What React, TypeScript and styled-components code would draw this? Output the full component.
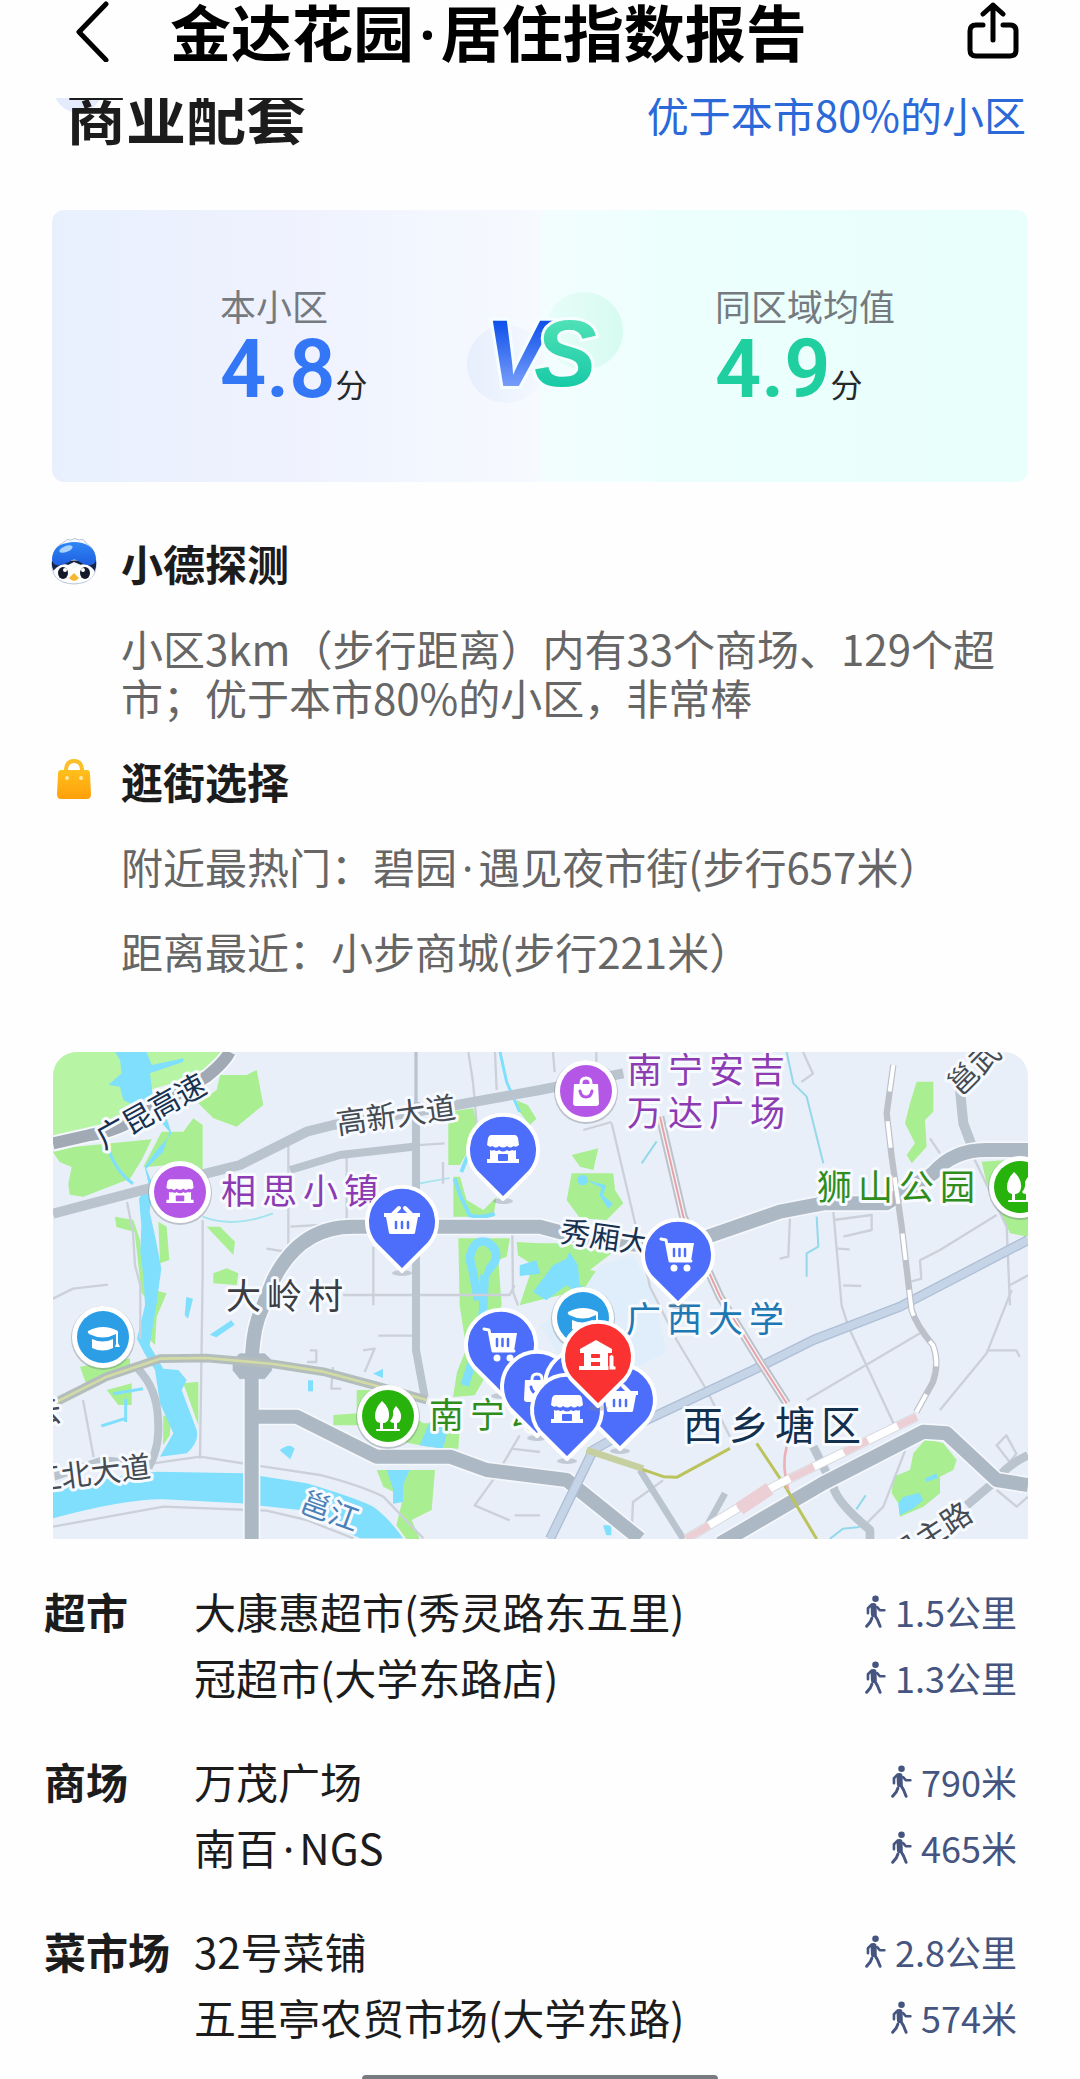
import React from "react";
import styled, { createGlobalStyle } from "styled-components";

const cjk = `"Noto Sans CJK SC", "Noto Sans", sans-serif`;

const GlobalStyle = createGlobalStyle`
  *, *::before, *::after { box-sizing: border-box; }
  body { margin: 0; background: #fefefe; color: #1c1c1c; font-family: ${cjk}; }
  h1, h2, h3, p, dl, dd, dt, ul { margin: 0; padding: 0; }
  button { border: 0; padding: 0; background: none; color: inherit; font: inherit; cursor: pointer; }
  svg { display: block; }
`;

const Page = styled.div`
  display: flex;
  flex-direction: column;
`;

const TopBar = styled.header`
  display: flex;
  align-items: flex-start;
  padding: 0 60px 36px 74px;
`;

const Title = styled.h1`
  flex: 1;
  padding-left: 60px;
  font-size: 61px;
  line-height: 62px;
  font-weight: 600;
  color: #000;
`;

const IconButton = styled.button`
  display: flex;
  align-items: center;
  height: 62px;
`;

const NarrowDot = styled.span`
  padding: 0 5px;
  font-family: "Noto Sans", sans-serif;
  line-height: 0;
`;

const Report = styled.main`
  overflow: hidden;
`;

const HeadingRow = styled.div`
  display: flex;
  align-items: center;
  justify-content: space-between;
  margin-top: -14px;
  padding: 0 54px 0 52px;
`;

const Heading = styled.h2`
  padding-left: 14px;
  font-size: 60px;
  line-height: 60px;
  font-weight: 600;
  background: radial-gradient(circle at 26px 4px, #e3ebfd 24px, transparent 25px);
`;

const Rank = styled.a`
  font-size: 42px;
  line-height: 60px;
  color: #2b68d8;
  text-decoration: none;
`;

const Compare = styled.section`
  position: relative;
  display: grid;
  grid-template-columns: 1fr 1fr;
  min-height: 272px;
  margin: 66px 52px 0;
  border-radius: 12px;
  overflow: hidden;
  background: #f5fbfe;
`;

const Side = styled.div<{ $tone: "own" | "area" }>`
  display: flex;
  flex-direction: column;
  gap: 5px;
  padding-top: 77px;
  padding-left: ${(p) => (p.$tone === "own" ? "168px" : "175px")};
  border-radius: 12px;
  background: ${(p) =>
    p.$tone === "own"
      ? "linear-gradient(90deg, #e8f0fe 0%, #eff2fe 48%, #f6fafe 100%)"
      : "linear-gradient(90deg, #f3fdfe 0%, #edfffd 24%, #e8fffb 100%)"};
`;

const SideLabel = styled.span`
  font-size: 36px;
  line-height: 36px;
  color: #757a80;
`;

const Score = styled.div<{ $color: string }>`
  display: flex;
  align-items: baseline;
  font-family: Roboto, ${cjk};
  font-size: 81px;
  line-height: 84px;
  font-weight: 600;
  color: ${(p) => p.$color};
`;

const Unit = styled.span`
  font-family: ${cjk};
  font-size: 32px;
  line-height: 32px;
  font-weight: 400;
  color: #26292c;
`;

const VsBadge = styled.svg`
  position: absolute;
  left: 50%;
  top: 50%;
  width: 168px;
  height: 128px;
  transform: translate(-50%, -50%);
`;

const Insights = styled.div`
  display: flex;
  flex-direction: column;
  gap: 36px;
  padding: 57px 48px 0;
`;

const Insight = styled.section`
  display: grid;
  grid-template-columns: 52px 1fr;
  column-gap: 21px;
  row-gap: 36px;
`;

const InsightIcon = styled.div`
  display: flex;
  align-items: center;
  justify-content: center;
  height: 44px;
`;

const InsightTitle = styled.h3`
  font-size: 42px;
  line-height: 48px;
  font-weight: 600;
`;

const InsightText = styled.p`
  grid-column: 2;
  font-size: 42px;
  line-height: 49px;
  color: #666;
`;

const MapCard = styled.figure`
  margin: 77px 52px 0 53px;
  border-radius: 24px 24px 0 0;
  overflow: hidden;
  background: #e9eff8;

  svg { width: 100%; height: auto; }
`;

const Places = styled.dl`
  display: flex;
  flex-direction: column;
  gap: 38px;
  padding: 39px 63px 25px 44px;
`;

const Group = styled.div`
  display: grid;
  grid-template-columns: 150px 1fr;
`;

const GroupName = styled.dt`
  font-size: 42px;
  line-height: 66px;
  font-weight: 600;
`;

const Place = styled.dd`
  grid-column: 2;
  display: flex;
  align-items: center;
  justify-content: space-between;
`;

const PlaceName = styled.span`
  font-size: 42px;
  line-height: 66px;
`;

const Distance = styled.span`
  display: flex;
  align-items: center;
  gap: 9px;
  font-size: 36px;
  line-height: 66px;
  color: #45557f;
`;

const HomeBar = styled.div`
  width: 33%;
  height: 4px;
  margin: 0 auto;
  border-radius: 6px 6px 0 0;
  background: #777a7e;
`;

/* A middle dot set in the Latin face, which keeps it from filling a whole CJK cell. */
const withDots = (text: string) =>
  text.split("·").map((part, i) => (
    <React.Fragment key={i}>
      {i > 0 && <NarrowDot>·</NarrowDot>}
      {part}
    </React.Fragment>
  ));

/* ---------- small icons ---------- */

const WalkIcon = () => (
  <svg width="21" height="33" viewBox="144 98 64 100" fill="none" stroke="currentColor" strokeLinecap="round" strokeLinejoin="round" aria-hidden="true">
    <circle cx="176" cy="109" r="10" fill="currentColor" stroke="none" />
    <path d="M170 131L171 156" strokeWidth="18" />
    <path d="M164 127L153 138V153M181 135L189 144H203" strokeWidth="8" />
    <path d="M173 158L182 173L190 193M165 168L160 180L149 193" strokeWidth="9" />
  </svg>
);

const Bird = () => (
  <svg width="48" height="48" viewBox="0 0 48 48" aria-hidden="true">
    <defs>
      <linearGradient id="cap" x1="0" y1="0" x2="0" y2="1">
        <stop offset="0" stopColor="#2f86f7" />
        <stop offset="1" stopColor="#1f5fe0" />
      </linearGradient>
    </defs>
    <path d="M14 5Q17 1 21 3Q25 0 29 3Q34 1 36 6Q46 12 46 26Q47 46 24 47Q1 46 2 26Q3 10 14 5Z" fill="#f4f8fd" stroke="#b8c6da" strokeWidth="1" />
    <path d="M2 24Q1 31 5 35Q10 27 18 28L24 25L31 28Q39 27 44 35Q47 30 46 23Z" fill="#172447" />
    <path d="M4 33Q14 22 24 32Q35 22 44 33Q45 45 24 46Q4 45 4 33Z" fill="#fff" />
    <path d="M2 22Q3 8 17 6Q24 4 32 6Q45 9 46 22Q46 27 41 28Q35 29 30 25Q24 20 19 25Q12 29 6 28Q2 26 2 22Z" fill="url(#cap)" />
    <ellipse cx="16" cy="12" rx="7" ry="3" transform="rotate(-20 16 12)" fill="#a8d2ff" />
    <ellipse cx="13" cy="36" rx="5" ry="6" fill="#15192b" />
    <ellipse cx="35" cy="36" rx="5" ry="6" fill="#15192b" />
    <circle cx="15" cy="33" r="2" fill="#fff" />
    <circle cx="33" cy="33" r="2" fill="#fff" />
    <path d="M24 36L29 41Q24 47 19 41Z" fill="#f7b733" />
  </svg>
);

const Bag = () => (
  <svg width="36" height="40" viewBox="0 0 36 40" aria-hidden="true">
    <defs>
      <linearGradient id="bag" x1="0" y1="0" x2="0" y2="1">
        <stop offset="0" stopColor="#ffc01c" />
        <stop offset="1" stopColor="#ff9f0a" />
      </linearGradient>
    </defs>
    <path d="M10 13V10Q11 2 18 2Q25 2 26 10V13" fill="none" stroke="#fcbf2a" strokeWidth="4" />
    <path d="M5 11H31Q34 11 34 15L35 35Q35 40 31 40H5Q1 40 1 35L2 15Q2 11 5 11Z" fill="url(#bag)" />
    <circle cx="11" cy="19" r="2" fill="#ffe9a8" />
    <circle cx="25" cy="19" r="2" fill="#ffe9a8" />
  </svg>
);

/* ---------- map ---------- */

type GlyphName = "store" | "basket" | "cart" | "bag" | "home" | "cap" | "tree";

/* Every glyph is drawn around 0,0 on a field of about 36 units. */
const Glyph = ({ name, tone }: { name: GlyphName; tone: string }) => {
  switch (name) {
    case "store":
      return (
        <g fill="#fff">
          <path d="M-12 -15H12Q14 -15 15 -12L16 -5Q13 -2 10.500 -4Q7 -1 4 -4Q0 -1 -4 -4Q-7 -1 -10.500 -4Q-13 -2 -16 -5L-15 -12Q-14 -15 -12 -15Z" />
          <path d="M-13 0Q-10 1 -9 0Q-6 2 -4 0Q0 3 4 0Q6 2 9 0Q11 1 13 0V9H16V13H-16V9H-13Z" />
          <rect x="-5" y="4" width="10" height="7" rx="1" fill={tone} />
        </g>
      );
    case "basket":
      return (
        <g fill="#fff">
          <path d="M-10 -7L-3 -14M10 -7L3 -14" stroke="#fff" strokeWidth="4" strokeLinecap="round" />
          <path d="M-18 -9H18V-5H16L13 11Q13 12 11 12H-11Q-13 12 -13 11L-16 -5H-18Z" />
          <path d="M-6 0V6M0 0V6M6 0V6" stroke={tone} strokeWidth="2.500" strokeLinecap="round" />
        </g>
      );
    case "cart":
      return (
        <g fill="#fff">
          <path d="M-17 -16L-12 -15L-8 6H13" fill="none" stroke="#fff" strokeWidth="3" strokeLinecap="round" strokeLinejoin="round" />
          <path d="M-11 -12H16L13 6H-8Z" />
          <path d="M-4 -6V1M1.500 -6V1M7 -6V1" stroke={tone} strokeWidth="2.500" strokeLinecap="round" />
          <circle cx="-4" cy="13" r="3.500" />
          <circle cx="9" cy="13" r="3.500" />
        </g>
      );
    case "bag":
      return (
        <g fill="#fff">
          <path d="M-5 -6V-8Q-5 -13 0 -13Q5 -13 5 -8V-6" fill="none" stroke="#fff" strokeWidth="3" />
          <path d="M-12 -7H12L13 12Q13 15 10 15H-10Q-13 15 -13 12Z" />
          <path d="M-6 0Q-5 6 0 6Q5 6 6 0" fill="none" stroke={tone} strokeWidth="3" strokeLinecap="round" />
        </g>
      );
    case "home":
      return (
        <g fill="#fff">
          <path d="M0 -17L16 -8V-4H12V9H18V13H-17V9H-12V-4H-16V-8Z" transform="translate(-2 0)" />
          <rect x="-7" y="-3" width="9" height="4" rx="1" fill={tone} />
          <rect x="-7" y="5" width="9" height="4" fill={tone} />
          <path d="M11 13V-1Q14 -4 16 -1V9H18V13Z" stroke={tone} strokeWidth="1" />
        </g>
      );
    case "cap":
      return (
        <g fill="#fff">
          <path d="M-15 -6Q0 -14 15 -6Q15 -4 13 -3Q0 4 -14 -3Q-16 -5 -15 -6Z" />
          <path d="M-11 2Q0 7 10 2V11Q0 16 -11 11Z" />
          <path d="M14 -5V6" stroke="#fff" strokeWidth="2" />
          <path d="M14 4L17 10H12Z" />
        </g>
      );
    case "tree":
      return (
        <g fill="#fff">
          <path d="M-6 -15Q2 -8 1 1Q0 7 -5 7V14H-8V7Q-13 6 -13 0Q-13 -8 -6 -15Z" />
          <path d="M8 -10Q14 -4 13 2Q12 7 9 7V14H6V7Q3 7 2 5Q6 1 5 -5Q6 -8 8 -10Z" />
          <path d="M-11 14H11" stroke="#fff" strokeWidth="2" strokeLinecap="round" />
        </g>
      );
  }
};

const Pin = ({ x, y, icon, tone = "#4d6dfb" }: { x: number; y: number; icon: GlyphName; tone?: string }) => (
  <g transform={`translate(${x} ${y})`}>
    <ellipse cx="0" cy="51" rx="10" ry="3" fill="#7c8798" opacity="0.35" />
    <path d="M0 49L-27 22A35 35 0 1 1 27 22Z" fill={tone} stroke="#fff" strokeWidth="4" strokeLinejoin="round" />
    <Glyph name={icon} tone={tone} />
  </g>
);

const Poi = ({ x, y, icon, tone }: { x: number; y: number; icon: GlyphName; tone: string }) => (
  <g transform={`translate(${x} ${y})`}>
    <circle cy="1" r="32" fill="#68707c" opacity="0.35" />
    <circle r="31" fill="#fff" />
    <circle r="26" fill={tone} />
    <g transform={icon === "store" ? "scale(0.85)" : undefined}>
      <Glyph name={icon} tone={tone} />
    </g>
  </g>
);

const MapText = styled.text<{ $size: number; $color: string; $place?: boolean }>`
  font-family: ${cjk};
  font-size: ${(p) => p.$size}px;
  font-weight: 400;
  letter-spacing: ${(p) => (p.$place ? "6px" : "normal")};
  fill: ${(p) => p.$color};
  stroke: #f7faff;
  stroke-width: 6px;
  stroke-linejoin: round;
  paint-order: stroke;
`;

const RoadText = ({ x, y, turn, color = "#454b52", children }: { x: number; y: number; turn: number; color?: string; children: string }) => (
  <MapText $size={30} $color={color} textAnchor="middle" transform={`translate(${x} ${y}) rotate(${turn})`} dy="11">
    {children}
  </MapText>
);

const Terrain = () => (
  <g transform="scale(0.33333)" fill="none" strokeLinejoin="round">
    {/* parks */}
    <g fill="#a9ee90">
      <path d="M0 0H516L440 70L300 110L200 200L130 230L0 255Z" fill="#b7f4a3" />
      <path d="M0 300L60 285L160 275L296 262L268 320L231 380L91 434L50 428L46 395L56 345L20 330Z" />
      <path d="M326 239L391 239L421 199L449 219V359L401 334L291 344L271 344Z" />
      <path d="M501 69H581L611 54L631 159L551 224L481 199L436 154L491 114Z" />
      <path d="M186 494L241 504L261 564L281 744L265 720L245 540L190 525Z" />
      <path d="M316 509L341 524L349 624L321 634Z" />
      <path d="M461 524H501L546 569L541 609Z" />
      <path d="M481 664L521 649L556 664L551 699L481 694Z" />
      <path d="M1186 179L1261 169L1271 214L1246 294L1221 339H1186Z" />
      <path d="M1201 374L1221 374L1241 444L1291 474L1331 434L1321 494H1201Z" />
      <path d="M1216 559H1371L1361 614L1336 624L1346 760L1310 860L1300 970L1265 1030L1200 1035L1212 960L1240 890L1220 760Z" />
      <path d="M1391 145L1425 160L1450 200L1430 220L1400 180Z" />
      <path d="M301 714L341 724L311 794L306 879L271 844Z" />
      <path d="M81 944L231 919V944L101 1000Z" />
      <path d="M161 1014L236 994V1059H196Z" />
      <path d="M391 994L436 989L436 1120Z" />
      <path d="M331 1090L355 1100L350 1150L330 1180Z" />
      <path d="M841 1089L911 1084V1014H961L1111 1114L1221 1114L1216 1190L1126 1184L1050 1170L960 1120H841Z" />
      <path d="M971 1254H1146L1136 1374L1076 1404L1100 1461H1060L1030 1420L1051 1334L991 1304Z" />
      <path d="M2591 89H2641V179L2616 204L2621 284L2576 334L2561 309L2586 274L2556 214L2571 154Z" />
      <path d="M1556 309L1636 289L1621 354L1581 344Z" />
      <path d="M1556 364H1681L1686 414L1711 454L1661 504L1581 499L1541 444Z" />
      <path d="M1391 570L1460 574H1521L1701 584L1611 654L1661 664L1611 709L1461 744L1400 760L1440 640L1395 610Z" />
      <path d="M2786 329L2861 324L2925 484V554L2871 544L2801 394Z" />
      <path d="M2621 1159L2671 1174L2711 1224L2701 1254L2661 1274V1324L2611 1364L2541 1394L2536 1354L2516 1324L2521 1274L2571 1254L2581 1204Z" />
    </g>
    {/* university campus */}
    <path d="M1640 640L1740 610L1800 720L1840 900L1720 960L1540 940L1460 820L1560 760Z" fill="#dfeefa" />
    {/* rivers and ponds */}
    <g fill="#80dffd">
      <path d="M186 0L201 24L206 64L166 99L201 104L211 144L241 159L301 144L291 64L391 29V19L296 39L281 0Z" />
      <path d="M265 160L340 195L356 245L311 294L275 344L286 394L258 440L265 520L262 600L272 680L276 760L252 860L275 905L306 954L321 1054L361 1144L321 1214L401 1204Q440 1170 431 1134L386 1014L401 984L376 954L331 950L290 880L310 760L325 650L308 560L290 480L300 400L280 350L330 300L350 240L280 160Z" />
      <path d="M0 1314Q160 1275 311 1259L571 1264L761 1294Q900 1335 961 1364Q1010 1400 1050 1459H921L741 1374L561 1354L331 1342Q220 1340 0 1399Z" />
      <path d="M1500 640L1540 620L1550 600L1575 640L1580 700L1625 715L1600 745L1540 700L1480 745L1440 720Z" />
      <path d="M1400 640L1450 625L1462 665L1400 672Z" />
      <circle cx="1589" cy="384" r="16" />
      <path d="M1600 384L1660 400L1650 430L1680 455L1665 470L1640 430L1645 408Z" />
      <path d="M1001 1254H1070L1050 1300V1350L1020 1355V1310Z" />
      <path d="M1100 1180L1130 1110L1190 1110L1170 1190Z" />
      <path d="M2536 1354L2550 1335L2600 1322L2610 1345L2580 1370L2540 1390Z" />
      <path d="M2615 1280L2650 1264L2655 1278L2620 1290Z" />
      <path d="M470 848L535 805L545 818L490 856Z" />
      <path d="M400 735L420 740L405 800L395 790Z" />
      <path d="M960 965L990 950V978Z" />
      <path d="M765 985H780V1018H765Z" />
      <path d="M680 1195Q710 1170 725 1190L712 1222Z" />
      <path d="M1650 1420H1675V1450H1660Z" />
    </g>
    <g stroke="#80dffd" strokeWidth="16">
      <path d="M165 290Q190 360 240 395" strokeWidth="9" />
      <path d="M1205 380L1222 430L1250 490Q1290 500 1325 485M1225 360L1245 310" strokeWidth="12" />
      <path d="M1275 745L1260 660L1250 620Q1260 560 1300 570Q1340 590 1325 630L1295 670L1290 780L1280 860L1235 1000" strokeWidth="26" />
      <path d="M145 1122L215 1100M218 1040V1110M180 1025L270 1010" strokeWidth="9" />
      <path d="M449 494Q540 530 660 484" strokeWidth="6" stroke="#a3e4ee" />
      <path d="M1341 0L1361 90L1400 180" strokeWidth="9" />
      <path d="M2201 0L2221 94L2261 134L2311 334M2291 494L2296 584L2261 604V674" strokeWidth="6" stroke="#93d9e9" />
      <path d="M1766 334L1811 268M2438 1330L2410 1372M2330 1461L2370 1430L2420 1425" strokeWidth="6" stroke="#93d9e9" />
      <path d="M1100 394L1190 378" strokeWidth="5" stroke="#a3e4ee" />
    </g>
    <path d="M1275 610Q1262 650 1290 670Q1305 640 1290 605Z" fill="#a9ee90" />

    {/* lanes */}
    <g stroke="#cbd0d9" strokeWidth="7">
      <path d="M1246 0L1260 90L1271 214M1326 0L1331 114M706 274V600L640 590M881 314V514L712 524M449 504V664L441 1220" />
      <path d="M961 584V760M870 729H1370L1385 700M1378 550L1380 720L1395 760M1175 274L1085 280M1170 330V395" />
      <path d="M222 450L240 540L246 640L262 700L262 860M0 740L60 710L165 698M90 1044L122 1215" />
      <path d="M0 1424L331 1364L641 1376L761 1404L901 1459M301 1234L441 1214L601 1239L801 1269Q920 1300 991 1334L1111 1459" />
      <path d="M1676 214L1791 704L1871 864L1961 1014L2031 1154M1591 234L1676 210M1500 0L1505 60M1630 0V40" />
      <path d="M2211 494L2206 614L2180 620M2341 479L2366 760L2386 824L2531 1134M2341 504L2456 489V534L2371 554M2355 590L2390 592M2370 700L2425 702" />
      <path d="M2631 259L2661 304M2761 314L2861 524L2871 760M2831 489L2661 594L2601 625L2605 680L2570 690M2250 0L2280 65L2245 90" />
      <path d="M2261 1044L2601 844M2876 714L2801 904L2661 1074M2561 1184L2491 1364L2441 1414M2831 1314L2891 1364L2925 1334M2800 895H2890L2900 915" />
      <path d="M2831 1180L2860 1150L2890 1205L2870 1230ZM2925 670L2870 700M1735 1461L1740 1350L1830 1285" />
      <path d="M976 851H1080M930 895L965 890L935 960M770 895H790V930H762M840 945L835 1010H865M1400 1150L1330 1270L1265 1360L1370 1405M1385 1390H1461M1375 1190L1461 1200" />
    </g>

    {/* secondary roads */}
    <g stroke="#bac4cf" strokeWidth="26">
      <path d="M0 485L251 419L461 364L561 339L761 239L841 219L1211 159L1461 114L1711 64" strokeWidth="30" />
      <path d="M711 354L861 309L1081 284" strokeWidth="24" />
      <path d="M1089 0V160" strokeWidth="10" />
      <path d="M1089 150V894L1115 1034" strokeWidth="24" />
      <path d="M255 950Q312 1010 315 1100Q322 1180 290 1240" strokeWidth="24" />
      <path d="M0 1275L150 1225L300 1240" strokeWidth="24" />
      <path d="M2721 114L2731 214L2761 294" strokeWidth="30" />
      <path d="M2281 1184L2341 1304Q2350 1350 2451 1434V1461" strokeWidth="26" />
      <path d="M1761 1254L1891 1461M2016 1324L1961 1424" strokeWidth="20" />
      <path d="M2925 1210Q2860 1240 2831 1284L2741 1360" strokeWidth="26" />
    </g>

    {/* trunk roads */}
    <g stroke="#f4f8fc" strokeWidth="52">
      <path d="M596 1461V950Q596 860 615 800L661 684Q740 524 900 524H1461L1600 562Q1850 600 1961 555L2181 479L2311 454H2500L2640 364Q2700 294 2800 294H2925" />
      <path d="M596 1094H731L971 1214H1191L1301 1254L1541 1284L1641 1364L1761 1461" />
      <path d="M2001 1475L2311 1294L2611 1139L2681 1144L2831 1284L2925 1299" />
      <path d="M0 274L111 249Q200 235 260 190L351 140L461 74Q515 30 530 0" strokeWidth="48" />
    </g>
    <g stroke="#adb8c5" strokeWidth="42">
      <path d="M596 1461V950Q596 860 615 800L661 684Q740 524 900 524H1461L1600 562Q1850 600 1961 555L2181 479L2311 454H2500L2640 364Q2700 294 2800 294H2925" />
      <path d="M596 1094H731L971 1214H1191L1301 1254L1541 1284L1641 1364L1761 1461" />
      <path d="M2001 1475L2311 1294L2611 1139L2681 1144L2831 1284L2925 1299" />
      <path d="M0 274L111 249Q200 235 260 190L351 140L461 74Q515 30 530 0" strokeWidth="36" stroke="#a0a9b4" />
      <path d="M560 905H635L656 925V955L635 980H560L540 955V925Z" fill="#adb8c5" strokeWidth="2" />
    </g>

    {/* blue avenue */}
    <g>
      <path d="M1491 1461L1621 1194L1781 1104L2101 954L2281 864L2541 764L2925 564" stroke="#aebfd5" strokeWidth="30" />
      <path d="M1491 1461L1621 1194L1781 1104L2101 954L2281 864L2541 764L2925 564" stroke="#c6d4e8" strokeWidth="22" />
    </g>

    {/* metro lines */}
    <path d="M0 1055L161 974L321 920L461 918L661 936L811 959L961 999L1121 1044" stroke="#b3bdbc" strokeWidth="26" />
    <path d="M0 1055L161 974L321 920L461 918L661 936L811 959L961 999L1121 1044" stroke="#d3dba5" strokeWidth="8" />
    <path d="M1601 1194L1831 1274L1871 1276L2031 1189" stroke="#bac35c" strokeWidth="9" />
    <path d="M1601 1194L1770 1250" stroke="#c6cfa0" strokeWidth="20" />
    <path d="M2111 1174L2191 1294L2291 1461" stroke="#bac35c" strokeWidth="9" />
    <path d="M2201 1184Q2185 1240 2206 1314" stroke="#ecb1b7" strokeWidth="8" />
    <path d="M1821 194L1891 494L2001 734L2121 929L2201 1054" stroke="#bcc2ca" strokeWidth="26" />
    <path d="M1821 194L1891 494L2001 734L2121 929L2201 1054" stroke="#f4f3f6" strokeWidth="14" />
    <path d="M1821 194L1891 494L2001 734L2121 929L2201 1054" stroke="#e5a2a8" strokeWidth="6" />

    {/* railways */}
    <path d="M2521 39L2501 184L2516 314L2546 524L2571 734L2576 774Q2590 820 2640 880Q2660 930 2640 990L2590 1080" stroke="#bcc0c8" strokeWidth="19" />
    <path d="M2521 39L2501 184L2516 314L2546 524L2571 734L2576 774Q2590 820 2640 880Q2660 930 2640 990L2590 1080" stroke="#fff" strokeWidth="12" strokeDasharray="80 90" />
    <path d="M1900 1461L2161 1304L2591 1094" stroke="#d2d5da" strokeWidth="28" />
    <path d="M1900 1461L2161 1304L2591 1094" stroke="#fff" strokeWidth="23" />
    <path d="M1900 1461L2161 1304L2591 1094" stroke="#eccfd5" strokeWidth="22" strokeDasharray="80 100" />
    <path d="M2060 1370L2150 1310" stroke="#eccfd5" strokeWidth="40" />
  </g>
);

const CityMap = () => (
  <svg viewBox="0 0 975 487" role="img" aria-label="周边商业地图">
    <Terrain />
    <RoadText x={98} y={59} turn={-29} color="#17314f">广昆高速</RoadText>
    <RoadText x={343} y={63} turn={-8}>高新大道</RoadText>
    <RoadText x={552} y={185} turn={8} color="#17314f">秀厢大</RoadText>
    <RoadText x={921} y={16} turn={-45}>邕武</RoadText>
    <RoadText x={38} y={421} turn={-7}>江北大道</RoadText>
    <RoadText x={878} y={482} turn={-33}>民主路</RoadText>
    <RoadText x={-7} y={360} turn={-8}>云</RoadText>
    <RoadText x={277} y={459} turn={20} color="#4b80b8">邕江</RoadText>
    <MapText $size={35} $place $color="#8c3bb2" x="168" y="152">相思小镇</MapText>
    <MapText $size={35} $place $color="#8c3bb2" x="574" y="31">南宁安吉</MapText>
    <MapText $size={35} $place $color="#8c3bb2" x="574" y="74">万达广场</MapText>
    <MapText $size={35} $place $color="#2f8d1c" x="764" y="148">狮山公园</MapText>
    <MapText $size={35} $place $color="#3a3d42" x="173" y="257">大岭村</MapText>
    <MapText $size={35} $place $color="#2f8d1c" x="376" y="376">南宁动</MapText>
    <Poi x={127} y={140} icon="store" tone="#b457e6" />
    <Poi x={533} y={39} icon="bag" tone="#b457e6" />
    <Poi x={50} y={285} icon="cap" tone="#2b9ee6" />
    <Poi x={530} y={266} icon="cap" tone="#2b9ee6" />
    <Poi x={335} y={364} icon="tree" tone="#28b20c" />
    <Poi x={967} y={135} icon="tree" tone="#28b20c" />
    <MapText $size={35} $place $color="#1d78b3" x="573" y="280">广西大学</MapText>
    <MapText $size={40} $place $color="#122f4e" x="630" y="388">西乡塘区</MapText>
    <Pin x={450} y={98} icon="store" />
    <Pin x={349} y={170} icon="basket" />
    <Pin x={625} y={203} icon="cart" />
    <Pin x={448} y={293} icon="cart" />
    <Pin x={484} y={335} icon="bag" />
    <Pin x={527} y={333} icon="store" />
    <Pin x={567} y={348} icon="basket" />
    <Pin x={514} y={358} icon="store" />
    <Pin x={545} y={305} icon="home" tone="#fb3232" />
  </svg>
);

/* ---------- page data ---------- */

const groups = [
  {
    name: "超市",
    places: [
      { name: "大康惠超市(秀灵路东五里)", distance: "1.5公里" },
      { name: "冠超市(大学东路店)", distance: "1.3公里" },
    ],
  },
  {
    name: "商场",
    places: [
      { name: "万茂广场", distance: "790米" },
      { name: "南百·NGS", distance: "465米" },
    ],
  },
  {
    name: "菜市场",
    places: [
      { name: "32号菜铺", distance: "2.8公里" },
      { name: "五里亭农贸市场(大学东路)", distance: "574米" },
    ],
  },
];

export default function App() {
  return (
    <Page lang="zh-CN">
      <GlobalStyle />
      <TopBar>
        <IconButton type="button" aria-label="返回">
          <svg width="36" height="62" viewBox="0 0 36 62" fill="none" stroke="#000" strokeWidth="5" strokeLinecap="round" strokeLinejoin="round">
            <path d="M32 4L5 32L32 60" />
          </svg>
        </IconButton>
        <Title>{withDots("金达花园·居住指数报告")}</Title>
        <IconButton type="button" aria-label="分享">
          <svg width="54" height="58" viewBox="0 0 54 58" fill="none" stroke="#000" strokeWidth="5" strokeLinecap="round" strokeLinejoin="round">
            <path d="M17 23H10Q4 23 4 29V48Q4 54 10 54H44Q50 54 50 48V29Q50 23 44 23H37M27 38V3M17 12L27 3L37 12" />
          </svg>
        </IconButton>
      </TopBar>

      <Report>
        <HeadingRow>
          <Heading>商业配套</Heading>
          <Rank href="#rank">优于本市80%的小区</Rank>
        </HeadingRow>

        <Compare>
          <Side $tone="own">
            <SideLabel>本小区</SideLabel>
            <Score $color="#3377f6">
              4.8<Unit>分</Unit>
            </Score>
          </Side>
          <Side $tone="area">
            <SideLabel>同区域均值</SideLabel>
            <Score $color="#20cf9f">
              4.9<Unit>分</Unit>
            </Score>
          </Side>
          <VsBadge viewBox="-8 0 168 128" role="img" aria-label="VS">
            <defs>
              <linearGradient id="v" x1="0" y1="0" x2="0" y2="1">
                <stop offset="0.200" stopColor="#0f52ea" />
                <stop offset="0.850" stopColor="#7ea2fb" />
              </linearGradient>
              <linearGradient id="s" x1="0" y1="0" x2="0" y2="1">
                <stop offset="0.200" stopColor="#4ee0b6" />
                <stop offset="0.850" stopColor="#15c9a6" />
              </linearGradient>
              <linearGradient id="blob" x1="0" y1="0" x2="1" y2="0">
                <stop offset="0" stopColor="#e7effd" />
                <stop offset="1" stopColor="#f4f9fe" />
              </linearGradient>
              <linearGradient id="leaf" x1="0" y1="0" x2="1" y2="0">
                <stop offset="0" stopColor="#e9fdf8" />
                <stop offset="1" stopColor="#d6fbf0" />
              </linearGradient>
            </defs>
            <circle cx="42" cy="82" r="39" fill="url(#blob)" />
            <circle cx="120" cy="49" r="39" fill="url(#leaf)" />
            <g fontFamily="Liberation Sans, sans-serif" fontWeight="700" fontStyle="italic" fontSize="94" stroke="#f6fdff" strokeWidth="6" paintOrder="stroke">
              <text x="21" y="104" fill="url(#v)">V</text>
              <text x="70" y="104" fill="url(#s)">S</text>
            </g>
          </VsBadge>
        </Compare>

        <Insights>
          <Insight>
            <InsightIcon><Bird /></InsightIcon>
            <InsightTitle>小德探测</InsightTitle>
            <InsightText>小区3km（步行距离）内有33个商场、129个超市；优于本市80%的小区，非常棒</InsightText>
          </Insight>
          <Insight>
            <InsightIcon><Bag /></InsightIcon>
            <InsightTitle>逛街选择</InsightTitle>
            <InsightText>{withDots("附近最热门：碧园·遇见夜市街(步行657米）")}</InsightText>
            <InsightText>距离最近：小步商城(步行221米）</InsightText>
          </Insight>
        </Insights>

        <MapCard>
          <CityMap />
        </MapCard>

        <Places>
          {groups.map((group) => (
            <Group key={group.name}>
              <GroupName>{group.name}</GroupName>
              {group.places.map((place) => (
                <Place key={place.name}>
                  <PlaceName>{withDots(place.name)}</PlaceName>
                  <Distance>
                    <WalkIcon />
                    {place.distance}
                  </Distance>
                </Place>
              ))}
            </Group>
          ))}
        </Places>
      </Report>
      <HomeBar />
    </Page>
  );
}
